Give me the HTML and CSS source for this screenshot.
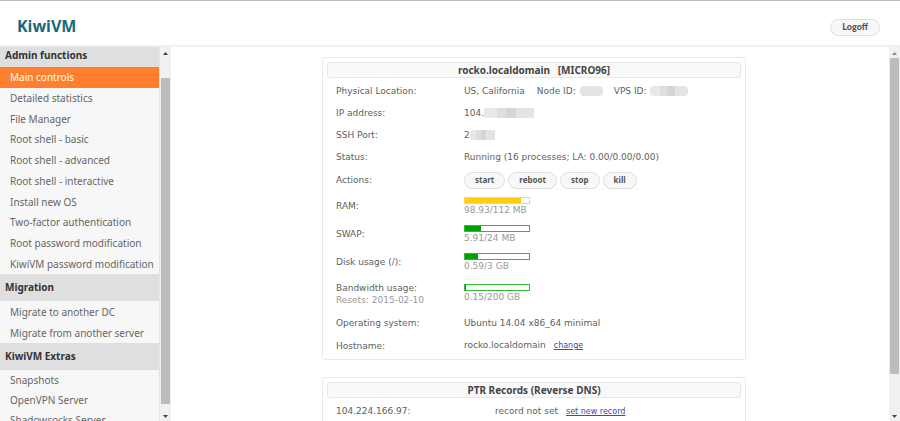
FILE: index.html
```html
<!DOCTYPE html>
<html lang="en">
<head>
<meta charset="utf-8">
<title>KiwiVM</title>
<link rel="stylesheet" href="styles.css">
</head>
<body>
<div class="app">
  <header class="topbar">
    <div class="logo">KiwiVM</div>
    <button type="button" class="pill logoff">Logoff</button>
  </header>
  <div class="body">
    <nav class="sidebar">
      <div class="menu">
        <h2 class="first">Admin functions</h2>
        <ul class="admin">
          <li><a class="active" href="#">Main controls</a></li>
          <li><a href="#">Detailed statistics</a></li>
          <li><a href="#">File Manager</a></li>
          <li><a href="#">Root shell - basic</a></li>
          <li><a href="#">Root shell - advanced</a></li>
          <li><a href="#">Root shell - interactive</a></li>
          <li><a href="#">Install new OS</a></li>
          <li><a href="#">Two-factor authentication</a></li>
          <li><a href="#">Root password modification</a></li>
          <li><a href="#">KiwiVM password modification</a></li>
        </ul>
        <h2>Migration</h2>
        <ul>
          <li><a href="#">Migrate to another DC</a></li>
          <li><a href="#">Migrate from another server</a></li>
        </ul>
        <h2>KiwiVM Extras</h2>
        <ul class="extras">
          <li><a href="#">Snapshots</a></li>
          <li><a href="#">OpenVPN Server</a></li>
          <li><a href="#">Shadowsocks Server</a></li>
        </ul>
      </div>
      <div class="scroll">
        <svg width="11" height="11" viewBox="0 0 11 11"><path d="M3 8L5.500 5L8 8z" fill="#444"/></svg>
        <div class="track side"><div class="thumb"></div></div>
        <svg width="11" height="11" viewBox="0 0 11 11"><path d="M3 5L5.500 8L8 5z" fill="#444"/></svg>
      </div>
    </nav>
    <main class="content">
      <section class="panel">
        <h1>rocko.localdomain &nbsp; [MICRO96]</h1>
        <table class="info">
          <tr><th>Physical Location:</th><td><div class="line"><span>US, California</span><span class="next">Node ID:</span><i class="blur node"></i><span class="vps">VPS ID:</span><i class="blur id"></i></div></td></tr>
          <tr><th>IP address:</th><td><div class="line">104.<i class="blur ip"></i></div></td></tr>
          <tr><th>SSH Port:</th><td><div class="line">2<i class="blur port"></i></div></td></tr>
          <tr><th>Status:</th><td>Running (16 processes; LA: 0.00/0.00/0.00)</td></tr>
          <tr class="actions"><th>Actions:</th><td><div class="buttons"><button type="button" class="pill">start</button><button type="button" class="pill">reboot</button><button type="button" class="pill">stop</button><button type="button" class="pill">kill</button></div></td></tr>
          <tr class="usage"><th>RAM:</th><td><div class="bar yellow"><div style="width:88%"></div></div><div class="note">98.93/112 MB</div></td></tr>
          <tr class="usage"><th>SWAP:</th><td><div class="bar"><div style="width:25%"></div></div><div class="note">5.91/24 MB</div></td></tr>
          <tr class="usage"><th>Disk usage (/):</th><td><div class="bar"><div style="width:20%"></div></div><div class="note">0.59/3 GB</div></td></tr>
          <tr class="bandwidth"><th>Bandwidth usage:<div class="resets">Resets: 2015-02-10</div></th><td><div class="bar"><div style="width:0.1%"></div></div><div class="note">0.15/200 GB</div></td></tr>
          <tr class="roomy"><th>Operating system:</th><td>Ubuntu 14.04 x86_64 minimal</td></tr>
          <tr class="roomy"><th>Hostname:</th><td>rocko.localdomain<a class="link" href="#">change</a></td></tr>
        </table>
      </section>
      <section class="panel">
        <h1>PTR Records (Reverse DNS)</h1>
        <table class="info ptr">
          <tr><th>104.224.166.97:</th><td>record not set<a class="link" href="#">set new record</a></td></tr>
        </table>
      </section>
    </main>
    <div class="scroll">
      <svg width="11" height="11" viewBox="0 0 11 11"><path d="M3 8L5.500 5L8 8z" fill="#888"/></svg>
      <div class="track page"><div class="thumb"></div></div>
      <svg width="11" height="11" viewBox="0 0 11 11"><path d="M3 5L5.500 8L8 5z" fill="#444"/></svg>
    </div>
  </div>
</div>
</body>
</html>
```
FILE: styles.css
```css
* { box-sizing: border-box; }
body {
  margin: 0;
  background: #fff;
  color: #606060;
  font: 9px/12px "DejaVu Sans", Verdana, sans-serif;
}
.app {
  display: flex;
  flex-direction: column;
  height: 100vh;
  overflow: hidden;
}
.topbar {
  flex: none;
  display: flex;
  align-items: center;
  justify-content: space-between;
  height: 47px;
  padding: 8px 20px 0 17px;
  border-top: 1px solid #bbb;
  border-bottom: 2px solid #f1f1f1;
}
.logo {
  padding-bottom: 2px;
  font: 700 16px/24px "Noto Sans", "Open Sans", sans-serif;
  color: #17697a;
}
.pill {
  height: 17px;
  padding: 0 11px;
  border: 1px solid #dedede;
  border-radius: 9px;
  background: #f8f8f8;
  color: #555;
  font: 700 8px/12px "Noto Sans", "Open Sans", sans-serif;
}
.logoff { font-family: Lato, sans-serif; font-size: 9px; font-weight: 900; }
.body { flex: 1; display: flex; min-height: 0; }
.sidebar { flex: none; display: flex; width: 171px; background: #f7f7f7; }
.menu {
  flex: 1;
  overflow: hidden;
  border-right: 1px solid #e4e4e4;
  font: 10px/20px "Noto Sans", "Open Sans", sans-serif;
}
.menu h2 {
  margin: 0;
  padding: 0 5px;
  background: #dfdfdf;
  color: #333;
  font-size: 10px;
  line-height: 27px;
}
.menu .first { height: 20px; line-height: 17px; }
.menu ul {
  display: grid;
  grid-auto-rows: 1fr;
  margin: 0;
  padding: 0;
  list-style: none;
}
.menu .admin { height: 207px; }
.menu a {
  display: flex;
  align-items: center;
  height: 100%;
  min-height: 21px;
  padding-left: 10px;
  color: #666;
  text-decoration: none;
  white-space: nowrap;
}
.menu .admin a, .menu .extras a { min-height: 20px; }
.menu .admin .active { background: #ff7f2e; color: #fff; }
.scroll {
  flex: none;
  display: flex;
  flex-direction: column;
  width: 11px;
  background: #f1f1f1;
}
.scroll svg { display: block; flex: none; }
.track { flex: 1; padding: 0 1px; }
.thumb { height: 100%; background: #bcbcbc; }
.side { padding: 20px 1px 6px; }
.page { padding-bottom: 36px; }
.content { flex: 1; min-width: 0; padding: 10px 0 0 8px; overflow: hidden; }
.panel {
  width: 424px;
  max-width: 100%;
  margin: 0 auto 17px;
  padding: 4px 4px 2px;
  border: 1px solid #e8e8e8;
  border-radius: 3px;
}
.panel h1 {
  margin: 0;
  border: 1px solid #e8e8e8;
  border-radius: 3px;
  background: #f9f9f9;
  color: #444;
  font: 700 10px/14px "Noto Sans", "Open Sans", sans-serif;
  text-align: center;
}
.info { width: 100%; margin-top: 2px; border-collapse: collapse; table-layout: fixed; }
.info tr { height: 22px; }
.info .actions { height: 24px; }
.info .usage { height: 28px; }
.info .bandwidth { height: 35px; }
.info .roomy { height: 23px; }
.info th {
  width: 137px;
  padding: 0 0 0 9px;
  font-weight: 400;
  text-align: left;
}
.info td { padding: 0; white-space: nowrap; }
.ptr th { width: 168px; }
.line { display: flex; align-items: center; }
.next { margin-left: 12px; }
.vps { margin-left: 11px; }
.blur { height: 10px; background: linear-gradient(90deg, #e8e8e8 0 25%, #dedede 25% 45%, #d5d5d5 45% 65%, #e4e4e4 65%); }
.node { width: 23px; margin-left: 4px; border-radius: 4px; background: #e4e4e4; }
.id { width: 38px; margin-left: 3px; border-radius: 4px; }
.ip { width: 50px; }
.port { width: 25px; border-radius: 4px 0 0 4px; }
.buttons { display: flex; gap: 3px; }
.actions .pill { padding: 0 10px; }
.bar { width: 66px; height: 7px; border: 1px solid #35ba35; }
.bar div { height: 100%; min-width: 1px; background: #00a000; }
.yellow { border-color: #ffda4a; }
.yellow div { background: #ffcc11; }
.note, .resets { color: #999; }
.link { margin-left: 8px; color: #4545bb; font-size: 8px; }
```
